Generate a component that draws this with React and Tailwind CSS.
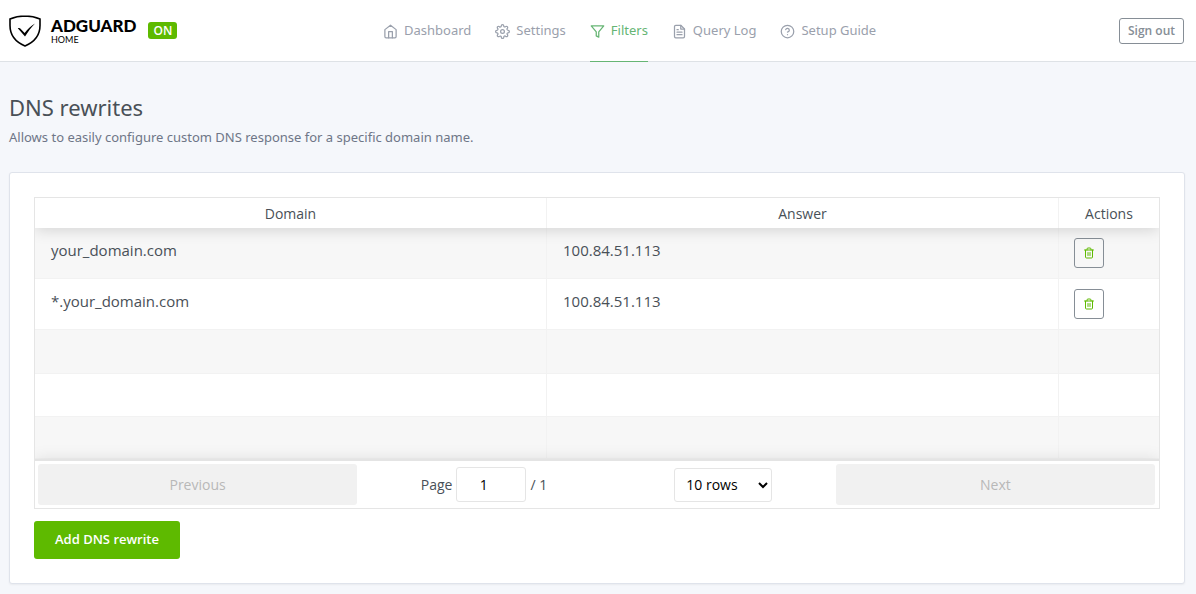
import { FiHome, FiSettings, FiFilter, FiFileText, FiHelpCircle, FiTrash2 } from "react-icons/fi";

const navItems = [
  { label: "Dashboard", Icon: FiHome },
  { label: "Settings", Icon: FiSettings },
  { label: "Filters", Icon: FiFilter, active: true },
  { label: "Query Log", Icon: FiFileText },
  { label: "Setup Guide", Icon: FiHelpCircle },
];

const rewrites = [
  { domain: "your_domain.com", answer: "100.84.51.113" },
  { domain: "*.your_domain.com", answer: "100.84.51.113" },
];

const emptyRows = [
  { id: "a", style: "h-[44px] bg-[#f7f7f7]" },
  { id: "b", style: "h-[43px]" },
  { id: "c", style: "h-[42px] bg-[#f7f7f7]" },
];

function Logo() {
  return (
    <a href="#home" className="flex items-center gap-2.5 text-black">
      <svg viewBox="0 0 32 32" className="size-8" fill="none" aria-hidden="true">
        <path
          d="M16 1C10.9 1 5.5 2 1 4v6.5C1 18.5 5.5 26.5 16 31 26.5 26.5 31 18.5 31 10.5V4C26.5 2 21.1 1 16 1Z"
          stroke="currentColor"
          strokeWidth="1.6"
        />
        <path d="M8.8 13.3c1.4-.5 2.4 0 3.2 1l3.6 3.6C18.600 14 21.800 11 26 8.500 22.200 12.300 19.200 16.500 16 21.600Z" fill="currentColor" />
      </svg>
      <span className="flex flex-col pt-px font-[Lato,sans-serif]">
        <span className="text-[17px] leading-[17px] font-black">ADGUARD</span>
        <span className="text-[9px] leading-3">HOME</span>
      </span>
    </a>
  );
}

function Header() {
  return (
    <header className="flex h-[62px] items-stretch border-b border-[#dee2e6] bg-white pr-3 pl-[9px]">
      <div className="flex w-[374px] flex-none items-center gap-3">
        <Logo />
        <span className="rounded-[3px] bg-[#5eba00] px-[5px] text-[12px] leading-[17px] font-semibold text-white">ON</span>
      </div>
      <nav className="flex flex-1 gap-6 font-['Noto_Sans',sans-serif]">
        {navItems.map(({ label, Icon, active }) => (
          <a
            key={label}
            href={"#" + label.toLowerCase().replace(" ", "_")}
            className={
              active
                ? "-mb-px flex items-center gap-1.5 border-b border-[#66b574] pt-px text-[13px] whitespace-nowrap text-[#66b574]"
                : "-mb-px flex items-center gap-1.5 border-b border-transparent pt-px text-[13px] whitespace-nowrap text-[#9aa0ac]"
            }
          >
            <Icon className="size-[15px]" />
            {label}
          </a>
        ))}
      </nav>
      <button type="button" className="h-[26px] self-center rounded-[3px] border border-[#868e96] px-2 text-[12px] font-semibold text-[#868e96]">
        Sign out
      </button>
    </header>
  );
}

function RewritesTable() {
  return (
    <div className="overflow-hidden border border-[#e5e5e5]">
      <table className="w-full table-fixed border-separate border-spacing-0 text-[15px]">
        <colgroup>
          <col />
          <col />
          <col className="w-[100px]" />
        </colgroup>
        <thead className="relative z-10 bg-white shadow-[0_2px_15px_rgba(0,0,0,0.15)]">
          <tr className="h-[30px]">
            <th scope="col" className="border-r border-[#f2f2f2] p-0 text-[14px] font-normal">Domain</th>
            <th scope="col" className="border-r border-[#f2f2f2] p-0 text-[14px] font-normal">Answer</th>
            <th scope="col" className="p-0 text-[14px] font-normal">Actions</th>
          </tr>
        </thead>
        <tbody>
          {rewrites.map(({ domain, answer }) => (
            <tr key={domain} className="h-[51px] odd:bg-[#f7f7f7]">
              <td className="border-r border-b border-[#f2f2f2] px-4 pt-0 pb-1.5">{domain}</td>
              <td className="border-r border-b border-[#f2f2f2] px-4 pt-0 pb-1.5">{answer}</td>
              <td className="border-b border-[#f2f2f2] px-[15px] py-0">
                <button
                  type="button"
                  aria-label={"Delete " + domain}
                  className="flex size-[30px] items-center justify-center rounded-[3px] border border-[#868e96] text-[#5eba00]"
                >
                  <FiTrash2 className="size-3" />
                </button>
              </td>
            </tr>
          ))}
          {emptyRows.map(({ id, style }) => (
            <tr key={id} className={style}>
              <td className="border-r border-b border-[#f2f2f2]" />
              <td className="border-r border-b border-[#f2f2f2]" />
              <td className="border-b border-[#f2f2f2]" />
            </tr>
          ))}
        </tbody>
      </table>
      <div className="relative flex h-[49px] items-center justify-between border-t-2 border-[#e4e4e4] bg-white pr-1 pl-[3px] text-[14px] shadow-[0_0_15px_rgba(0,0,0,0.1)]">
        <button type="button" disabled className="h-[41px] flex-1 rounded-[3px] bg-[#f1f1f1] text-[#b8b8b8]">
          Previous
        </button>
        <div className="flex flex-[1.5] items-center justify-around">
          <label className="flex items-center gap-1">
            Page
            <input
              type="number"
              defaultValue="1"
              className="h-[35px] w-[70px] rounded-[3px] border border-[#e5e5e5] text-center text-[14px] text-black"
            />
            <span>/ 1</span>
          </label>
          <select
            aria-label="Rows per page"
            defaultValue="10"
            className="h-[34px] w-[98px] rounded-[3px] border border-[#e5e5e5] bg-white px-[7px] text-[14px] text-black"
          >
            <option value="10">10 rows</option>
            <option value="20">20 rows</option>
            <option value="50">50 rows</option>
          </select>
        </div>
        <button type="button" disabled className="h-[41px] flex-1 rounded-[3px] bg-[#f1f1f1] text-[#b8b8b8]">
          Next
        </button>
      </div>
    </div>
  );
}

export default function App() {
  return (
    <div className="min-h-screen bg-[#f5f7fb] font-['Open_Sans','Noto_Sans',sans-serif] text-[#495057]">
      <Header />
      <main className="px-[9px] pt-[31px] pb-2.5">
        <h1 className="font-['Noto_Sans',sans-serif] text-[22px] leading-7">DNS rewrites</h1>
        <p className="mt-1.5 font-['Noto_Sans',sans-serif] text-[13px] leading-5 text-[#6e7687]">
          Allows to easily configure custom DNS response for a specific domain name.
        </p>
        <section className="mt-[25px] mr-[2px] rounded-[3px] border border-[#dfe3eb] bg-white p-6 shadow-[0_1px_2px_rgba(0,0,0,0.05)]">
          <RewritesTable />
          <button type="button" className="mt-3 h-[38px] rounded-[3px] bg-[#5eba00] px-[21px] text-[13px] font-semibold text-white">
            Add DNS rewrite
          </button>
        </section>
      </main>
    </div>
  );
}
